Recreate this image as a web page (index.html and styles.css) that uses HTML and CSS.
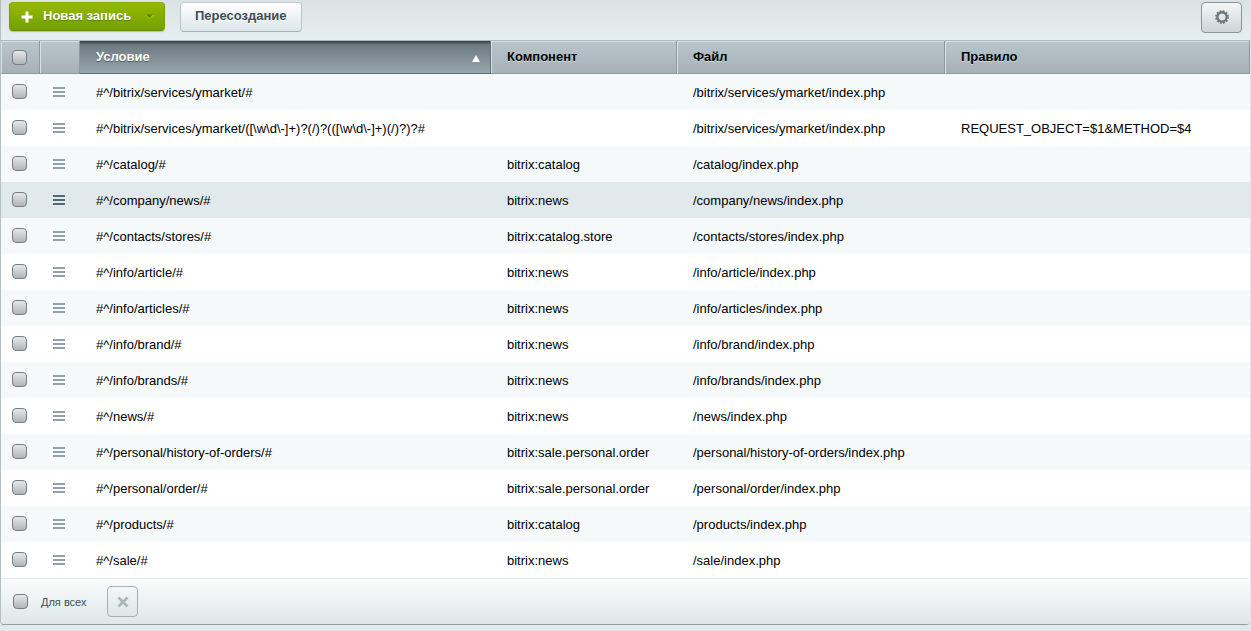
FILE: index.html
```html
<!DOCTYPE html>
<html lang="ru">
<head>
<meta charset="utf-8">
<title>Обработка адресов</title>
<link rel="stylesheet" href="styles.css">
</head>
<body>
<main class="panel">
  <div class="toolbar">
    <button type="button" class="btn btn-add">
      <svg class="plus" width="12" height="12" viewBox="0 0 12 12" aria-hidden="true"><path d="M4.500 .5h3v4h4v3h-4v4h-3v-4h-4v-3h4z" fill="#fff"/></svg>
      <span>Новая запись</span>
      <svg class="arrow" width="9" height="6" viewBox="0 0 9 6" aria-hidden="true"><path d="M1 .5h7L4.500 4z" fill="#5e8500"/><path d="M.5 1l4 4 4-4" fill="none" stroke="#a9c74a"/></svg>
    </button>
    <button type="button" class="btn btn-plain">Пересоздание</button>
    <button type="button" class="btn btn-gear" aria-label="Настройки">
      <svg width="14" height="14" viewBox="0 0 14 14" aria-hidden="true"><circle cx="7" cy="7" r="4.600" fill="none" stroke="#69737a" stroke-width="2.200"/><circle cx="7" cy="7" r="6.100" fill="none" stroke="#69737a" stroke-width="1.500" stroke-dasharray="1.900 1.294"/></svg>
    </button>
  </div>
  <table class="grid">
    <colgroup><col class="col-check"><col class="col-menu"><col class="col-cond"><col class="col-comp"><col class="col-file"><col></colgroup>
    <thead>
      <tr>
        <th class="check"><input type="checkbox" aria-label="Выбрать все"></th>
        <th></th>
        <th class="sorted"><div class="sort">Условие<svg width="8" height="7" viewBox="0 0 8 7" aria-hidden="true"><path d="M4 0l4 7H0z" fill="#fff"/></svg></div></th>
        <th>Компонент</th>
        <th>Файл</th>
        <th>Правило</th>
      </tr>
    </thead>
    <tbody id="rows"></tbody>
  </table>
  <div class="footer">
    <label class="all"><input type="checkbox">Для всех</label>
    <button type="button" class="btn btn-delete" aria-label="Удалить">
      <svg width="12" height="12" viewBox="0 0 12 12" aria-hidden="true"><path d="M1.500 1.500l9 9M10.500 1.500l-9 9" stroke="#aeb5b8" stroke-width="2.800"/></svg>
    </button>
  </div>
</main>
<script src="rows.js"></script>
</body>
</html>
```

FILE: styles.css
```css
* { box-sizing: border-box; }

body {
  margin: 0;
  background: #dfe8eb;
  color: #000;
  font: 13px/16px "Liberation Sans", Arial, sans-serif;
}

.panel {
  margin-right: 1px;
  border: solid #b2bfc3;
  border-width: 0 0 0 1px;
  border-bottom: 1px solid #919ea3;
  border-radius: 0 0 4px 4px;
  overflow: hidden;
}

.toolbar {
  display: flex;
  align-items: flex-start;
  height: 40px;
  padding: 2px 8px 0;
  background: linear-gradient(#dae2e4, #e7eef1);
}

.btn {
  display: flex;
  align-items: center;
  justify-content: center;
  flex: none;
  margin: 0;
  padding: 0;
  border: 1px solid #a9b5ba;
  border-radius: 4px;
  font: bold 13px/16px "Liberation Sans", Arial, sans-serif;
  cursor: pointer;
}

.btn svg { flex: none; }

.btn-add {
  width: 156px;
  height: 29px;
  padding: 0 10px 2px;
  justify-content: flex-start;
  color: #fff;
  border-color: #86ad00 #7ba000 #648a00;
  background: linear-gradient(#94ba00, #73a000);
  text-shadow: 0 1px 1px #587b00;
  box-shadow: 0 1px 1px #b2bfc3;
}

.plus { margin: 2px 10px 0 1px; }
.arrow { margin: 2px 0 0 auto; }

.btn-plain {
  height: 30px;
  margin: 0 0 0 15px;
  padding: 0 14px 2px;
  color: #3f4b54;
  border-color: #c3ced2 #b9c4c9 #a3b0b5;
  background: linear-gradient(#fff, #dce6ea);
  text-shadow: 0 1px 0 #fff;
}

.btn-gear {
  width: 41px;
  height: 31px;
  margin-left: auto;
  padding-bottom: 2px;
  border-color: #87959a;
  background: linear-gradient(#f5f7f8, #ccd5d9);
}

.grid {
  width: 100%;
  table-layout: fixed;
  border-collapse: separate;
  border-spacing: 0;
  border-top: 1px solid #a9bac7;
}

.col-check { width: 39px; }
.col-menu { width: 40px; }
.col-cond { width: 411px; }
.col-comp { width: 186px; }
.col-file { width: 268px; }

.grid th,
.grid td {
  padding: 1px 16px 0;
  text-align: left;
  white-space: nowrap;
}

.grid th {
  height: 33px;
  padding-top: 0;
  border: solid #8c999e;
  border-width: 0 1px 1px 0;
  background: linear-gradient(#b8c5cb, #a6b2b5);
  box-shadow: inset 1px 1px 0 #d6e0e5;
  text-shadow: 0 1px 0 #d0dade;
}

.grid th.check { padding: 0 0 0 11px; }
.grid td.check { padding: 0 0 2px 11px; }

.grid th.sorted {
  color: #fff;
  border-color: #646f77;
  background: linear-gradient(#343c44, #6f7b82 4px, #97a5ac);
  box-shadow: none;
  text-shadow: 0 1px 1px #4b565c;
}

.sort {
  display: flex;
  align-items: center;
  justify-content: space-between;
  margin-right: -6px;
}

.sort svg { margin-top: 2px; }

.grid td {
  height: 36px;
  background: #fff;
}

.grid tbody tr:nth-child(odd) td { background: #f5f9fa; }
.grid tbody tr.active td { background: #e1e9ec; }

.grid td.menu { padding: 0 0 0 13px; }

.row-menu {
  display: block;
  width: 12px;
  height: 10px;
  padding: 0;
  border: 0;
  color: #95a1a8;
  background: linear-gradient(currentColor 2px, transparent 2px 4px, currentColor 4px 6px, transparent 6px 8px, currentColor 8px);
  cursor: pointer;
}

.active .row-menu { color: #526a74; }

input[type="checkbox"] {
  appearance: none;
  display: block;
  width: 15px;
  height: 15px;
  margin: 0;
  border: 1px solid #757e82;
  border-radius: 4px;
  background: linear-gradient(#e6e7e8, #b0b5b8);
}

input[type="checkbox"]:checked { background: #6d9600; }

.footer {
  display: flex;
  align-items: center;
  height: 46px;
  padding: 0 12px;
  border-top: 1px solid #e9edee;
  background: linear-gradient(#fbfcfc, #dde7ea);
}

.all {
  display: flex;
  align-items: center;
  gap: 13px;
  color: #3f4b54;
  font-size: 11px;
}

.btn-delete {
  width: 31px;
  height: 31px;
  margin-left: 21px;
  border-color: #a3b0b4;
  background: linear-gradient(#f4f7f7, #dee6e9);
}
```

FILE: rows.js
```js
const rows = [
  ["#^/bitrix/services/ymarket/#", "", "/bitrix/services/ymarket/index.php", ""],
  ["#^/bitrix/services/ymarket/([\\w\\d\\-]+)?(/)?(([\\w\\d\\-]+)(/)?)?#", "", "/bitrix/services/ymarket/index.php", "REQUEST_OBJECT=$1&METHOD=$4"],
  ["#^/catalog/#", "bitrix:catalog", "/catalog/index.php", ""],
  ["#^/company/news/#", "bitrix:news", "/company/news/index.php", "", true],
  ["#^/contacts/stores/#", "bitrix:catalog.store", "/contacts/stores/index.php", ""],
  ["#^/info/article/#", "bitrix:news", "/info/article/index.php", ""],
  ["#^/info/articles/#", "bitrix:news", "/info/articles/index.php", ""],
  ["#^/info/brand/#", "bitrix:news", "/info/brand/index.php", ""],
  ["#^/info/brands/#", "bitrix:news", "/info/brands/index.php", ""],
  ["#^/news/#", "bitrix:news", "/news/index.php", ""],
  ["#^/personal/history-of-orders/#", "bitrix:sale.personal.order", "/personal/history-of-orders/index.php", ""],
  ["#^/personal/order/#", "bitrix:sale.personal.order", "/personal/order/index.php", ""],
  ["#^/products/#", "bitrix:catalog", "/products/index.php", ""],
  ["#^/sale/#", "bitrix:news", "/sale/index.php", ""]
];

const body = document.getElementById("rows");
for (const [condition, component, file, rule, active] of rows) {
  const tr = body.insertRow();
  if (active) tr.className = "active";

  const check = tr.insertCell();
  check.className = "check";
  const box = document.createElement("input");
  box.type = "checkbox";
  box.setAttribute("aria-label", condition);
  check.append(box);

  const menu = tr.insertCell();
  menu.className = "menu";
  const button = document.createElement("button");
  button.type = "button";
  button.className = "row-menu";
  button.setAttribute("aria-label", "Действия");
  menu.append(button);

  for (const text of [condition, component, file, rule]) {
    tr.insertCell().textContent = text;
  }
}
```
